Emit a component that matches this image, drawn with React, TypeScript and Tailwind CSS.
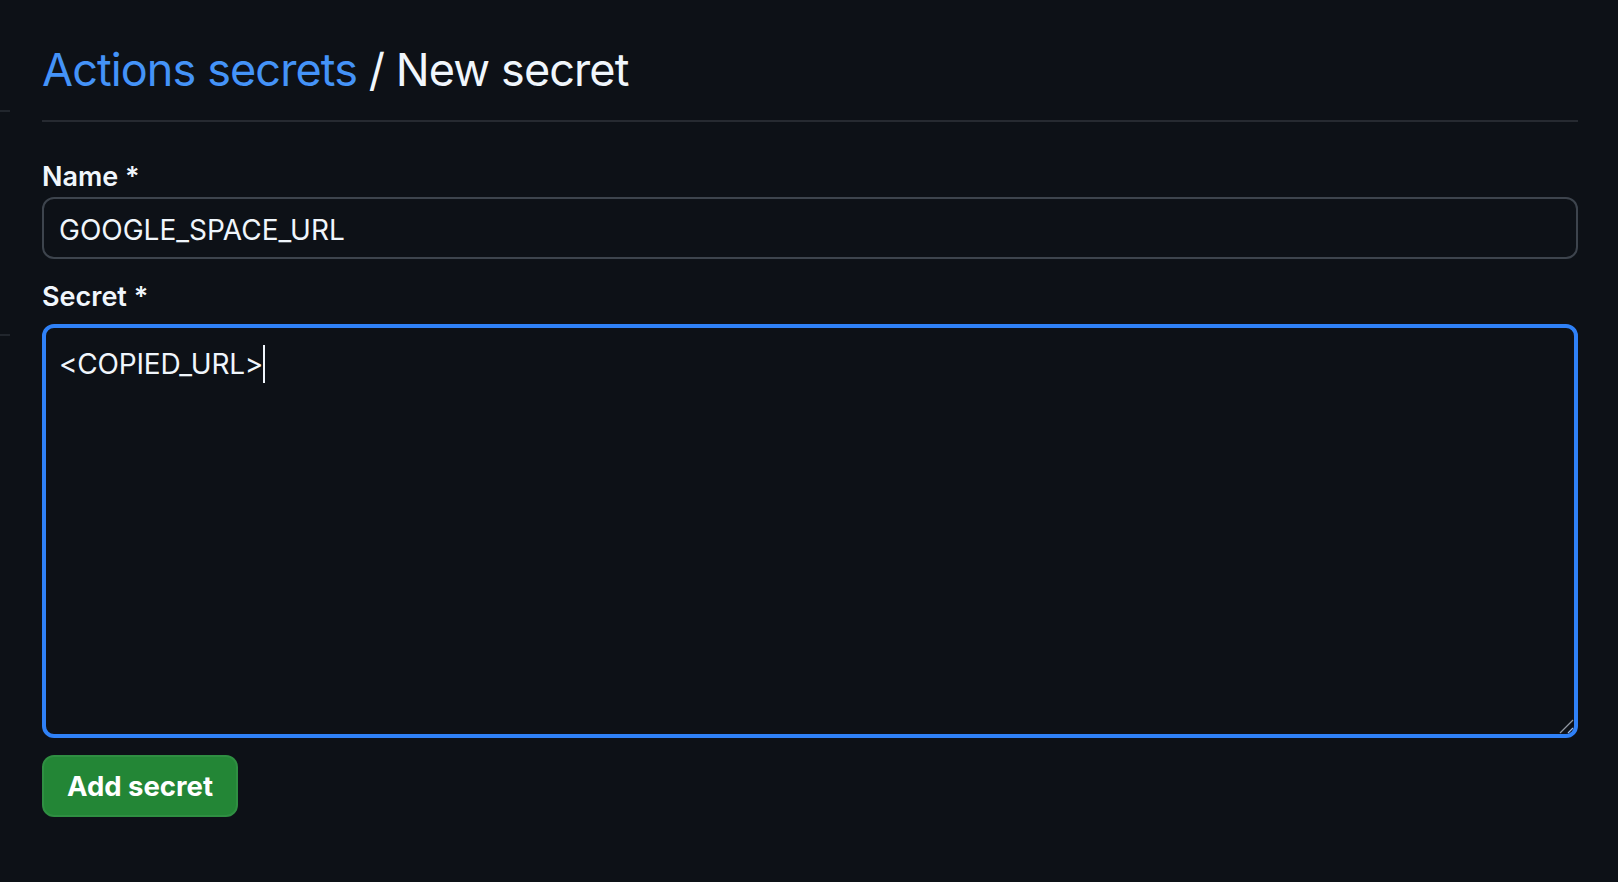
import React from "react";

export default function App() {
  return (
    <div
      className="relative w-[1618px] h-[882px] bg-[#0d1117] overflow-hidden"
      style={{ fontFamily: 'Inter, "Noto Sans", sans-serif' }}
    >
      {/* ghost sidebar lines */}
      <div className="absolute left-0 top-[110px] w-[10px] h-[2px] bg-[#21262d]" />
      <div className="absolute left-0 top-[334px] w-[10px] h-[2px] bg-[#21262d]" />

      <div className="ml-[42px] w-[1536px] flex flex-col">
        <div className="pt-[40px] pb-[21px] border-b-2 border-[#262a31]">
          <h2 className="text-[45px] leading-[59px] font-normal text-[#f0f6fc] tracking-[-0.9px]">
            <a className="text-[#4493f8]">Actions secrets</a>
            <span> / New secret</span>
          </h2>
        </div>

        <label className="mt-[37px] text-[27px] leading-[36px] font-semibold text-[#f0f6fc]">
          Name *
        </label>
        <div className="mt-[2px] h-[62px] rounded-[12px] border-2 border-[#3d444d] flex items-center pl-[15px] pt-[3px]">
          <span className="text-[28px] leading-[34px] text-[#f0f6fc]">GOOGLE_SPACE_URL</span>
        </div>

        <label className="mt-[20px] text-[27px] leading-[36px] font-semibold text-[#f0f6fc]">
          Secret *
        </label>
        <div className="relative mt-[9px] h-[414px] rounded-[12px] border-4 border-[#2f81f7] pl-[13px] pt-[15px]">
          <div className="flex items-center text-[28px] leading-[42px] text-[#f0f6fc]">
            <span className="tracking-[-0.2px]">&lt;COPIED_URL&gt;</span>
            <span className="ml-[0px] w-[2px] h-[38px] bg-[#f0f6fc]" />
          </div>
          <svg
            className="absolute right-[0px] bottom-[0px]"
            width="16"
            height="16"
            viewBox="0 0 16 16"
          >
            <line x1="2" y1="15" x2="15" y2="2" stroke="#9198a1" strokeWidth="1.3" />
            <line x1="10" y1="15" x2="15" y2="10" stroke="#9ab8e8" strokeWidth="1.3" />
          </svg>
        </div>

        <div className="mt-[17px]">
          <button className="w-[196px] h-[62px] rounded-[12px] bg-[#238636] border-2 border-[#2f8f42] text-white text-[27.5px] font-bold pt-[1px] flex items-center justify-center">
            Add secret
          </button>
        </div>
      </div>
    </div>
  );
}
